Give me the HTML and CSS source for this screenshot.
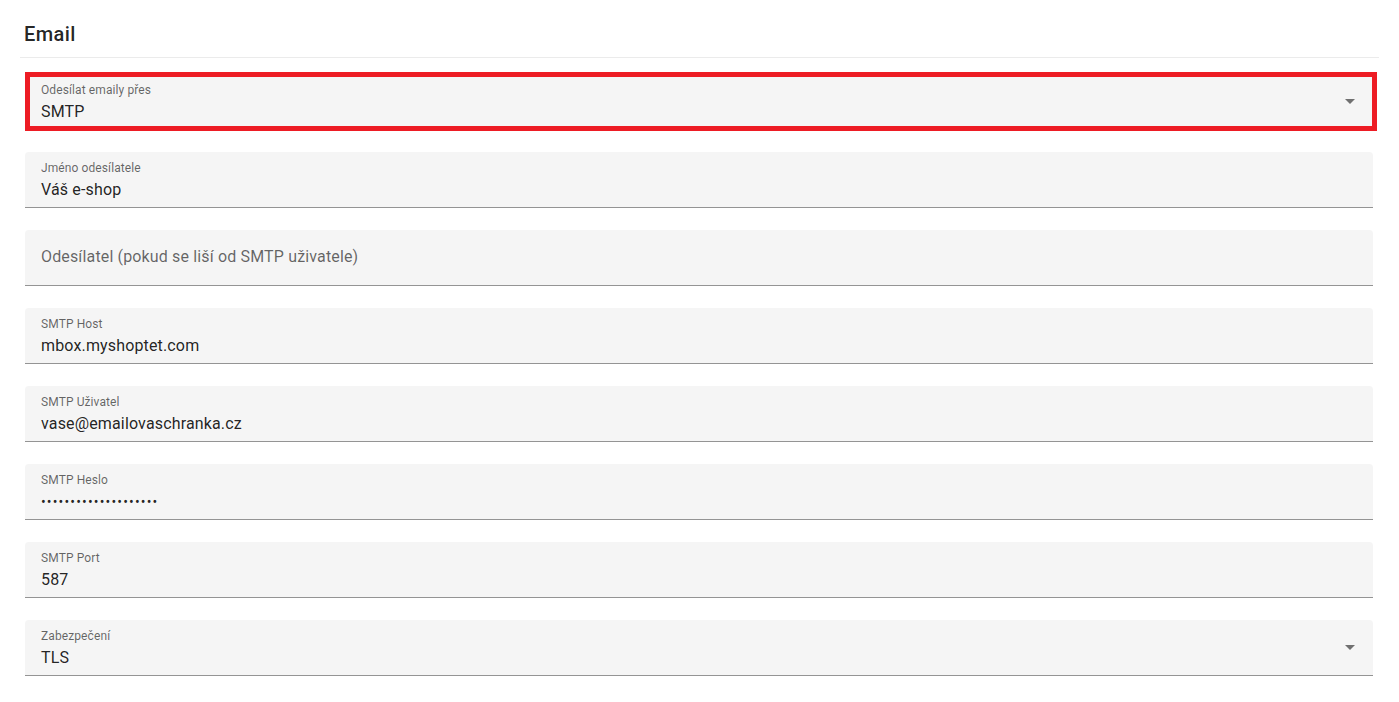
FILE: index.html
```html
<!DOCTYPE html>
<html lang="cs">
<head>
<meta charset="utf-8">
<title>Email</title>
<link rel="stylesheet" href="styles.css">
</head>
<body>
<section class="card">
  <header class="card-header">
    <h2 class="card-title">Email</h2>
  </header>
  <div class="fields">
    <div class="field field-select highlighted">
      <div class="field-body">
        <span class="field-label">Odesílat emaily přes</span>
        <span class="field-value">SMTP</span>
      </div>
      <svg class="arrow" viewBox="0 0 24 24" width="24" height="24"><path d="M7 10l5 5 5-5z"/></svg>
    </div>
    <div class="field">
      <div class="field-body">
        <span class="field-label">Jméno odesílatele</span>
        <span class="field-value">Váš e-shop</span>
      </div>
    </div>
    <div class="field field-empty">
      <div class="field-body">
        <span class="field-placeholder">Odesílatel (pokud se liší od SMTP uživatele)</span>
      </div>
    </div>
    <div class="field">
      <div class="field-body">
        <span class="field-label">SMTP Host</span>
        <span class="field-value">mbox.myshoptet.com</span>
      </div>
    </div>
    <div class="field">
      <div class="field-body">
        <span class="field-label">SMTP Uživatel</span>
        <span class="field-value">vase@emailovaschranka.cz</span>
      </div>
    </div>
    <div class="field">
      <div class="field-body">
        <span class="field-label">SMTP Heslo</span>
        <span class="field-value password">••••••••••••••••••••</span>
      </div>
    </div>
    <div class="field">
      <div class="field-body">
        <span class="field-label">SMTP Port</span>
        <span class="field-value">587</span>
      </div>
    </div>
    <div class="field field-select">
      <div class="field-body">
        <span class="field-label">Zabezpečení</span>
        <span class="field-value">TLS</span>
      </div>
      <svg class="arrow" viewBox="0 0 24 24" width="24" height="24"><path d="M7 10l5 5 5-5z"/></svg>
    </div>
  </div>
</section>
</body>
</html>
```

FILE: styles.css
```css
html, body {
  margin: 0;
  padding: 0;
  background: #ffffff;
}

body {
  font-family: Roboto, "Liberation Sans", Arial, sans-serif;
  color: rgba(0, 0, 0, 0.87);
}

.card {
  margin-left: 20px;
  width: 1359px;
}

.card-header {
  padding: 18px 0 7px 4px;
  border-bottom: 1px solid #ebebeb;
}

.card-title {
  margin: 0;
  font-size: 20px;
  line-height: 32px;
  font-weight: 500;
  letter-spacing: 0.4px;
  color: rgba(0, 0, 0, 0.87);
}

.fields {
  display: flex;
  flex-direction: column;
  gap: 22px;
  padding: 16px 6px 0 5px;
}

.field {
  position: relative;
  display: flex;
  align-items: center;
  height: 56px;
  box-sizing: border-box;
  padding: 0 11px 0 16px;
  background: #f5f5f5;
  border-radius: 4px 4px 0 0;
  border-bottom: 1px solid #949494;
}

.field-body {
  flex: 1;
  display: flex;
  flex-direction: column;
  align-self: stretch;
  padding-top: 9px;
  gap: 5px;
  min-width: 0;
}

.field-label {
  font-size: 12px;
  line-height: 14px;
  letter-spacing: 0.1px;
  color: rgba(0, 0, 0, 0.6);
}

.field-value {
  font-size: 16px;
  line-height: 20px;
  letter-spacing: 0.15px;
  color: rgba(0, 0, 0, 0.87);
}

.password {
  font-size: 14px;
  letter-spacing: 1.15px;
  color: rgba(0, 0, 0, 0.87);
}

.field-empty .field-body {
  padding-top: 0;
  justify-content: center;
}

.field-placeholder {
  font-size: 16px;
  line-height: 20px;
  letter-spacing: 0.15px;
  color: rgba(0, 0, 0, 0.6);
  margin-top: -1px;
}

.arrow {
  flex: none;
  fill: rgba(0, 0, 0, 0.54);
  margin-top: -1px;
}

.highlighted::after {
  content: "";
  position: absolute;
  top: -2px;
  left: 0;
  right: -4px;
  bottom: -2px;
  border: 5px solid #ed1c24;
  pointer-events: none;
}
```
